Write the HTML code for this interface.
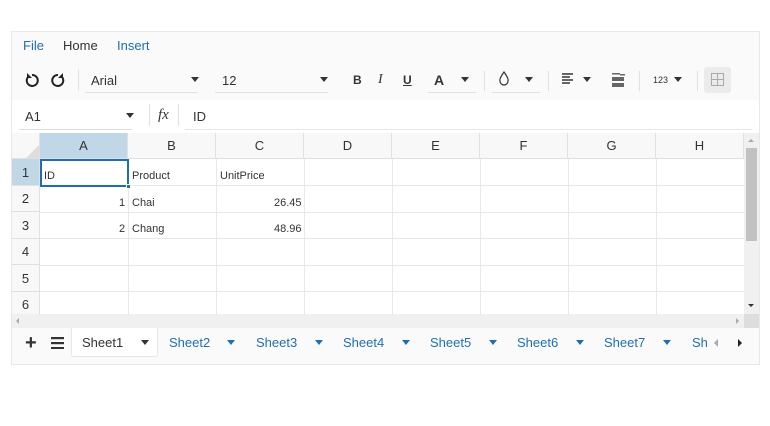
<!DOCTYPE html>
<html><head><style>
*{box-sizing:border-box;margin:0;padding:0}
body{width:770px;height:426px;background:#fff;font-family:"Liberation Sans",Arial,sans-serif;font-size:13px;color:#333;position:relative;overflow:hidden}
.abs{position:absolute}
.wrap{left:11px;top:31px;width:749px;height:334px;border:1px solid #e8e8e8;background:#fafafa}
.menu span{position:absolute;top:8px;font-size:13px}
.tri{display:inline-block;width:0;height:0;border-left:4px solid transparent;border-right:4px solid transparent;border-top:5px solid #333}
.cell{position:absolute;border-right:1px solid #e6e6e6;border-bottom:1px solid #e6e6e6;font-size:11px}
.hdr{position:absolute;background:#f8f8f8;border-right:1px solid #e0e0e0;border-bottom:1px solid #e0e0e0;text-align:center;font-size:13px;color:#333}
.tab{position:absolute;top:335px;font-size:13px;color:#1f6fb0}
</style></head><body>
<div class="abs wrap"></div>
<div class="menu">
<span style="left:23px;top:38px;color:#1f6fb0;position:absolute">File</span>
<span style="left:63px;top:38px;position:absolute">Home</span>
<span style="left:117px;top:38px;color:#1f6fb0;position:absolute">Insert</span>
</div>
<!-- toolbar -->
<svg class="abs" style="left:24px;top:72px" width="50" height="16" viewBox="0 0 50 16">
<path d="M4 5 A5.5 5.5 0 1 0 8 3" fill="none" stroke="#222" stroke-width="2"/><path d="M3 1 L3 6 L8 6 Z" fill="#222"/>
<path d="M38 5 A5.5 5.5 0 1 1 34 3" fill="none" stroke="#222" stroke-width="2"/><path d="M39 1 L39 6 L34 6 Z" fill="#222"/>
</svg>
<div class="abs" style="left:78px;top:70px;width:1px;height:20px;background:#e0e0e0"></div>
<div class="abs" style="left:85px;top:92px;width:113px;height:1px;background:#e0e0e0"></div>
<span class="abs" style="left:91px;top:73px">Arial</span><span class="abs tri" style="left:191px;top:77px"></span>
<div class="abs" style="left:215px;top:92px;width:113px;height:1px;background:#e0e0e0"></div>
<span class="abs" style="left:222px;top:73px">12</span><span class="abs tri" style="left:320px;top:77px"></span>
<b class="abs" style="left:353px;top:73px;font-size:12px">B</b>
<i class="abs" style="left:378px;top:72px;font-family:'Liberation Serif',serif;font-size:14px">I</i>
<u class="abs" style="left:403px;top:73px;font-size:12px;font-weight:bold">U</u>
<b class="abs" style="left:434px;top:72px;font-size:14px;font-weight:600">A</b><span class="abs tri" style="left:461px;top:77px"></span>
<div class="abs" style="left:428px;top:92px;width:48px;height:1px;background:#e0e0e0"></div>
<div class="abs" style="left:484px;top:71px;width:1px;height:20px;background:#e0e0e0"></div>
<svg class="abs" style="left:498px;top:71px" width="12" height="15"><path d="M6 1 Q1 8 2 10 A4 4 0 0 0 10 10 Q11 8 6 1Z" fill="none" stroke="#333" stroke-width="1.2"/></svg>
<span class="abs tri" style="left:525px;top:77px"></span>
<div class="abs" style="left:492px;top:92px;width:48px;height:1px;background:#e0e0e0"></div>
<div class="abs" style="left:548px;top:71px;width:1px;height:20px;background:#e0e0e0"></div>
<svg class="abs" style="left:562px;top:73px" width="12" height="12"><g fill="#666"><rect x="0" y="0" width="11" height="2"/><rect x="0" y="3" width="8" height="2"/><rect x="0" y="6" width="11" height="2"/><rect x="0" y="9" width="8" height="2"/></g></svg>
<span class="abs tri" style="left:583px;top:77px"></span>
<svg class="abs" style="left:612px;top:73px" width="13" height="14"><g fill="#666"><rect x="0" y="0" width="8" height="1.5"/><rect x="8" y="1" width="5" height="1.5"/><rect x="0" y="4" width="12" height="4"/><rect x="0" y="10" width="12" height="4"/></g></svg>
<div class="abs" style="left:639px;top:71px;width:1px;height:20px;background:#e0e0e0"></div>
<span class="abs" style="left:653px;top:75px;font-size:9px">123</span><span class="abs tri" style="left:674px;top:77px"></span>
<div class="abs" style="left:697px;top:71px;width:1px;height:20px;background:#e0e0e0"></div>
<div class="abs" style="left:704px;top:67px;width:27px;height:26px;background:#ebebeb;border-radius:3px"></div>
<svg class="abs" style="left:711px;top:73px" width="13" height="13"><g fill="none" stroke="#aaa" stroke-width="1"><rect x="0.5" y="0.5" width="12" height="12"/><path d="M6.5 0.5V12.5M0.5 6.5H12.5"/></g></svg>
<!-- formula bar -->
<div class="abs" style="left:12px;top:100px;width:747px;height:33px;background:#fff"></div>
<span class="abs" style="left:25px;top:109px">A1</span><span class="abs tri" style="left:126px;top:113px"></span>
<div class="abs" style="left:19px;top:129px;width:113px;height:1px;background:#e0e0e0"></div>
<div class="abs" style="left:149px;top:104px;width:1px;height:22px;background:#e0e0e0"></div>
<i class="abs" style="left:158px;top:107px;font-family:'Liberation Serif',serif;font-size:15px">fx</i>
<div class="abs" style="left:178px;top:104px;width:1px;height:22px;background:#e0e0e0"></div>
<span class="abs" style="left:193px;top:109px">ID</span>
<div class="abs" style="left:185px;top:129px;width:567px;height:1px;background:#e6e6e6"></div>
<!-- grid -->
<div class="abs" style="left:12px;top:133px;width:732px;height:181px;background:#fff;overflow:hidden" id="g">
<div class="hdr" style="left:0;top:0;width:28px;height:26px"></div>
<div class="abs" style="left:14px;top:12px;width:0;height:0;border-left:13px solid transparent;border-bottom:13px solid #ddd"></div>
<div class="hdr" style="left:28px;top:0;width:88px;height:26px;line-height:26px;background:#bfd7e6">A</div>
<div class="hdr" style="left:116px;top:0;width:88px;height:26px;line-height:26px">B</div>
<div class="hdr" style="left:204px;top:0;width:88px;height:26px;line-height:26px">C</div>
<div class="hdr" style="left:292px;top:0;width:88px;height:26px;line-height:26px">D</div>
<div class="hdr" style="left:380px;top:0;width:88px;height:26px;line-height:26px">E</div>
<div class="hdr" style="left:468px;top:0;width:88px;height:26px;line-height:26px">F</div>
<div class="hdr" style="left:556px;top:0;width:88px;height:26px;line-height:26px">G</div>
<div class="hdr" style="left:644px;top:0;width:88px;height:26px;line-height:26px">H</div>
<div class="hdr" style="left:0;top:26px;width:28px;height:27px;line-height:27px;background:#bfd7e6">1</div>
<div class="hdr" style="left:0;top:53px;width:28px;height:26px;line-height:26px">2</div>
<div class="hdr" style="left:0;top:79px;width:28px;height:27px;line-height:27px">3</div>
<div class="hdr" style="left:0;top:106px;width:28px;height:26px;line-height:26px">4</div>
<div class="hdr" style="left:0;top:132px;width:28px;height:27px;line-height:27px">5</div>
<div class="hdr" style="left:0;top:159px;width:28px;height:26px;line-height:26px">6</div>
<svg class="abs" style="left:28px;top:26px" width="704" height="160"><g stroke="#e8e8e8" stroke-width="1">
<path d="M88.5 0V160M176.5 0V160M264.5 0V160M352.5 0V160M440.5 0V160M528.5 0V160M616.5 0V160M704.5 0V160"/>
<path d="M0 26.5H704M0 53.5H704M0 79.5H704M0 106.5H704M0 132.5H704M0 159.5H704"/></g></svg>
<span class="abs" style="left:32px;top:37px;font-size:11px">ID</span>
<span class="abs" style="left:120px;top:37px;font-size:11px">Product</span>
<span class="abs" style="left:208px;top:37px;font-size:11px">UnitPrice</span>
<span class="abs" style="left:107px;top:64px;font-size:11px">1</span>
<span class="abs" style="left:120px;top:64px;font-size:11px">Chai</span>
<span class="abs" style="left:262px;top:64px;font-size:11px">26.45</span>
<span class="abs" style="left:107px;top:90px;font-size:11px">2</span>
<span class="abs" style="left:120px;top:90px;font-size:11px">Chang</span>
<span class="abs" style="left:262px;top:90px;font-size:11px">48.96</span>
<div class="abs" style="left:28px;top:26px;width:89px;height:28px;border:2px solid #1f6fb0"></div>
<div class="abs" style="left:114px;top:51px;width:5px;height:5px;background:#1f6fb0;border:1px solid #fff"></div>
</div>
<!-- v scrollbar -->
<div class="abs" style="left:744px;top:133px;width:15px;height:181px;background:#f0f0f0"></div>
<div class="abs" style="left:746px;top:148px;width:11px;height:93px;background:#c1c1c1"></div>
<div class="abs" style="left:748px;top:139px;border-left:3px solid transparent;border-right:3px solid transparent;border-bottom:3px solid #aaa"></div>
<div class="abs" style="left:748px;top:304px;border-left:3px solid transparent;border-right:3px solid transparent;border-top:3px solid #333"></div>
<!-- h scrollbar -->
<div class="abs" style="left:12px;top:314px;width:747px;height:14px;background:#f0f0f0"></div>
<div class="abs" style="left:744px;top:314px;width:15px;height:14px;background:#ddd"></div>
<div class="abs" style="left:16px;top:318px;border-top:3px solid transparent;border-bottom:3px solid transparent;border-right:3px solid #aaa"></div>
<div class="abs" style="left:736px;top:318px;border-top:3px solid transparent;border-bottom:3px solid transparent;border-left:3px solid #aaa"></div>
<!-- tabs -->
<div class="abs" style="left:12px;top:328px;width:747px;height:36px;background:#fafafa"></div>
<span class="abs" style="left:25px;top:332px;font-size:20px;font-weight:bold">+</span>
<svg class="abs" style="left:51px;top:337px" width="13" height="12"><g fill="#333"><rect y="0" width="13" height="2.2"/><rect y="5" width="13" height="2.2"/><rect y="10" width="13" height="2.2"/></g></svg>
<div class="abs" style="left:71px;top:328px;width:87px;height:29px;background:#fff;border:1px solid #e6e6e6;border-top:none;border-radius:0 0 3px 3px"></div>
<span class="abs" style="left:82px;top:335px">Sheet1</span><span class="abs tri" style="left:141px;top:340px"></span>
<span class="tab" style="left:169px">Sheet2</span><span class="abs tri" style="left:227px;top:340px;border-top-color:#1f6fb0"></span>
<span class="tab" style="left:256px">Sheet3</span><span class="abs tri" style="left:315px;top:340px;border-top-color:#1f6fb0"></span>
<span class="tab" style="left:343px">Sheet4</span><span class="abs tri" style="left:402px;top:340px;border-top-color:#1f6fb0"></span>
<span class="tab" style="left:430px">Sheet5</span><span class="abs tri" style="left:489px;top:340px;border-top-color:#1f6fb0"></span>
<span class="tab" style="left:517px">Sheet6</span><span class="abs tri" style="left:576px;top:340px;border-top-color:#1f6fb0"></span>
<span class="tab" style="left:604px">Sheet7</span><span class="abs tri" style="left:663px;top:340px;border-top-color:#1f6fb0"></span>
<span class="tab" style="left:692px">Sh</span>
<div class="abs" style="left:714px;top:339px;border-top:4px solid transparent;border-bottom:4px solid transparent;border-right:4px solid #aaa"></div>
<div class="abs" style="left:738px;top:339px;border-top:4px solid transparent;border-bottom:4px solid transparent;border-left:4px solid #222"></div>
</body></html>
